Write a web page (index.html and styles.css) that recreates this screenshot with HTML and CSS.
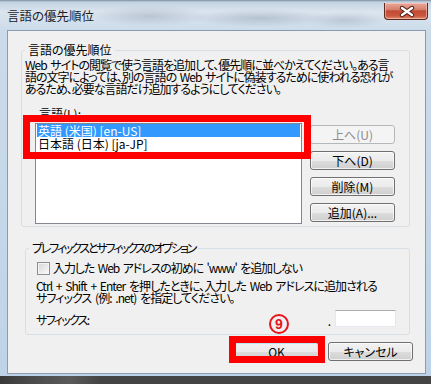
FILE: index.html
```html
<!DOCTYPE html>
<html lang="ja">
<head>
  <meta charset="UTF-8">
  <meta name="viewport" content="width=device-width, initial-scale=1.0">
  <link rel="stylesheet" href="styles.css">
</head>
<body>
<div class="window">
  <div class="titlebar">
    <span class="title">言語の優先順位</span>
    <button class="close-button" aria-label="閉じる">
      <svg width="44" height="17" viewBox="0 0 44 17">
        <path d="M17 5 L27 12 M27 5 L17 12" stroke="#4a1e16" stroke-width="4.5" stroke-linecap="round"/>
        <path d="M17 5 L27 12 M27 5 L17 12" stroke="#fff" stroke-width="2.4" stroke-linecap="round"/>
      </svg>
    </button>
  </div>
  <div class="client">
    <fieldset class="group group-lang">
      <legend>言語の優先順位</legend>
      <p class="desc">Web サイトの閲覧で使う言語を追加して、優先順に並べかえてください。ある言<br>語の文字によっては、別の言語の Web サイトに偽装するために使われる恐れが<br>あるため、必要な言語だけ追加するようにしてください。</p>
      <div class="list-label">言語(L):</div>
      <div class="list-row">
        <div class="listbox">
          <div class="item selected">英語 (米国) [en-US]</div>
          <div class="item">日本語 (日本) [ja-JP]</div>
          <div class="mark mark-list"></div>
        </div>
        <div class="side-buttons">
          <button class="btn" disabled>上へ(U)</button>
          <button class="btn">下へ(D)</button>
          <button class="btn">削除(M)</button>
          <button class="btn">追加(A)...</button>
        </div>
      </div>
    </fieldset>
    <fieldset class="group group-suffix">
      <legend>プレフィックスとサフィックスのオプション</legend>
      <label class="check"><span class="box"></span>入力した Web アドレスの初めに 'www' を追加しない</label>
      <p class="hint">Ctrl + Shift + Enter を押したときに、入力した Web アドレスに追加される<br>サフィックス (例: .net) を指定してください。</p>
      <div class="suffix-row">
        <span class="suffix-label">サフィックス:</span>
        <span class="dot">.</span>
        <span class="textbox"></span>
      </div>
    </fieldset>
    <div class="footer">
      <div class="ok-wrap">
        <button class="btn btn-ok">OK</button>
        <div class="mark mark-ok"></div>
        <span class="callout">9</span>
      </div>
      <button class="btn">キャンセル</button>
    </div>
  </div>
</div>
<div class="desktop"></div>
</body>
</html>
```

FILE: styles.css
```css
body {
  margin: 0;
  width: 431px;
  height: 384px;
  overflow: hidden;
  background-color: #444;
  font-family: "Noto Sans CJK JP", sans-serif;
  font-size: 12px;
  font-feature-settings: "palt";
  color: #000;
}

.window {
  height: 376px;
  box-sizing: border-box;
  padding: 0 5px 2px 7px;
  display: flex;
  flex-direction: column;
  background:
    radial-gradient(ellipse 60px 10px at 150px 16px, rgba(95,110,125,0.25), transparent),
    radial-gradient(ellipse 70px 9px at 260px 18px, rgba(95,110,125,0.28), transparent),
    radial-gradient(ellipse 40px 8px at 345px 20px, rgba(95,110,125,0.22), transparent),
    linear-gradient(180deg, #7e8d9c 0, #c2d2e2 2px, #dbe5ef 12px, #ccdbea 30px, #bfd3e8 100%);
}

.titlebar {
  height: 30px;
  display: flex;
  align-items: flex-start;
  justify-content: space-between;
}

.title {
  margin-top: 8px;
  line-height: 16px;
  font-size: 12.5px;
  color: #1e1e1e;
}

.close-button {
  margin-top: 3px;
  margin-right: -2px;
  width: 44px;
  height: 17px;
  padding: 0;
  border: 1px solid #5b2a22;
  border-top: none;
  border-radius: 0 0 4px 4px;
  background: linear-gradient(180deg, #e9a799 0, #d88270 40%, #c24a33 50%, #c9583f 80%, #e08a6c 100%);
  box-shadow: inset 0 0 0 1px rgba(255,220,210,0.5);
}

.close-button svg {
  display: block;
}

.client {
  flex: 1;
  background-color: #f0f0f0;
  border: 1px solid #8b9cb0;
  display: flex;
  flex-direction: column;
}

.group {
  border: 1px solid #d5dfe5;
  border-radius: 3px;
  padding: 0 3px;
  min-width: 0;
}

.group legend {
  padding: 0 3px;
  line-height: 14px;
}

.group-lang {
  margin: 12px 15px 0 13px;
  padding-bottom: 2px;
}

.group-suffix {
  margin: 14px 15px 0 17px;
  padding-bottom: 7px;
}

.group-suffix legend {
  letter-spacing: -2.2px;
}

p {
  margin: 0;
  padding: 0;
}

.desc {
  margin-top: 2px;
  line-height: 12px;
  letter-spacing: -1px;
  word-spacing: 2px;
  white-space: nowrap;
}

.list-label {
  margin: 12px 0 0 14px;
  line-height: 13px;
}

.list-row {
  display: flex;
  align-items: flex-start;
  margin-top: 3px;
}

.listbox {
  position: relative;
  width: 267px;
  height: 101px;
  box-sizing: border-box;
  margin-left: 10px;
  padding: 0 1px;
  border: 1px solid #828790;
  background-color: #fff;
}

.item {
  line-height: 13px;
  padding-left: 1px;
  white-space: nowrap;
}

.selected {
  background-color: #3399ff;
  color: #fff;
}

.side-buttons {
  display: flex;
  flex-direction: column;
  gap: 7px;
  margin: 2px 0 0 8px;
}

.btn {
  width: 85px;
  height: 19px;
  box-sizing: border-box;
  padding: 0;
  font: inherit;
  font-feature-settings: "palt";
  line-height: 16px;
  color: #000;
  border: 1px solid #707070;
  border-radius: 3px;
  background: linear-gradient(180deg, #f2f2f2 0, #ebebeb 50%, #dddddd 51%, #cfcfcf 100%);
  box-shadow: inset 0 0 0 1px rgba(255,255,255,0.7);
}

.btn:disabled {
  color: #8d8d8d;
  border-color: #b5b8ba;
  background: #f4f4f4;
  box-shadow: none;
}

.btn-ok {
  border-color: #3c7fb1;
  box-shadow: inset 0 0 0 1px #bfe6f7;
}

.check {
  display: flex;
  align-items: center;
  margin: 6px 0 0 8px;
  line-height: 14px;
  letter-spacing: -1.1px;
  word-spacing: 2px;
  white-space: nowrap;
}

.box {
  width: 13px;
  height: 13px;
  box-sizing: border-box;
  margin-right: 3px;
  border: 1px solid #8e8f8f;
  background: linear-gradient(135deg, #d6d6d6, #fafafa);
  box-shadow: inset 0 0 0 1px #f4f4f4;
}

.hint {
  margin: 5px 0 0 7px;
  line-height: 12px;
  letter-spacing: -0.95px;
  word-spacing: 2px;
  white-space: nowrap;
}

.suffix-row {
  display: flex;
  align-items: center;
  margin: 6px 10px 0 7px;
}

.suffix-label {
  flex: 1;
  line-height: 14px;
  margin-top: 3px;
  letter-spacing: -1.7px;
}

.dot {
  align-self: flex-end;
  line-height: 12px;
  margin-right: 4px;
}

.textbox {
  width: 61px;
  height: 17px;
  box-sizing: border-box;
  border: 1px solid #e3e9ef;
  border-top-color: #abadb3;
  background-color: #fff;
}

.footer {
  display: flex;
  justify-content: flex-end;
  gap: 9px;
  margin: 7px 12px 0 0;
}

.ok-wrap {
  position: relative;
  display: flex;
}

.mark {
  position: absolute;
  box-sizing: border-box;
  border: 7px solid #f00;
  pointer-events: none;
}

.mark-list {
  left: -13px;
  top: -9px;
  width: 288px;
  height: 44px;
}

.mark-ok {
  left: -5px;
  top: -6px;
  width: 96px;
  height: 27px;
}

.callout {
  position: absolute;
  left: 35px;
  top: -28px;
  width: 20px;
  height: 20px;
  box-sizing: border-box;
  border: 2px solid #e8141c;
  border-radius: 50%;
  color: #e8141c;
  font-family: "Liberation Sans", Arial, sans-serif;
  font-weight: bold;
  font-size: 14px;
  line-height: 16px;
  text-align: center;
}

.desktop {
  height: 8px;
  background: linear-gradient(90deg, #3a3a3a 0, #4a4a4a 30px, #5a5a5a 70px, #444 100px);
}
```
